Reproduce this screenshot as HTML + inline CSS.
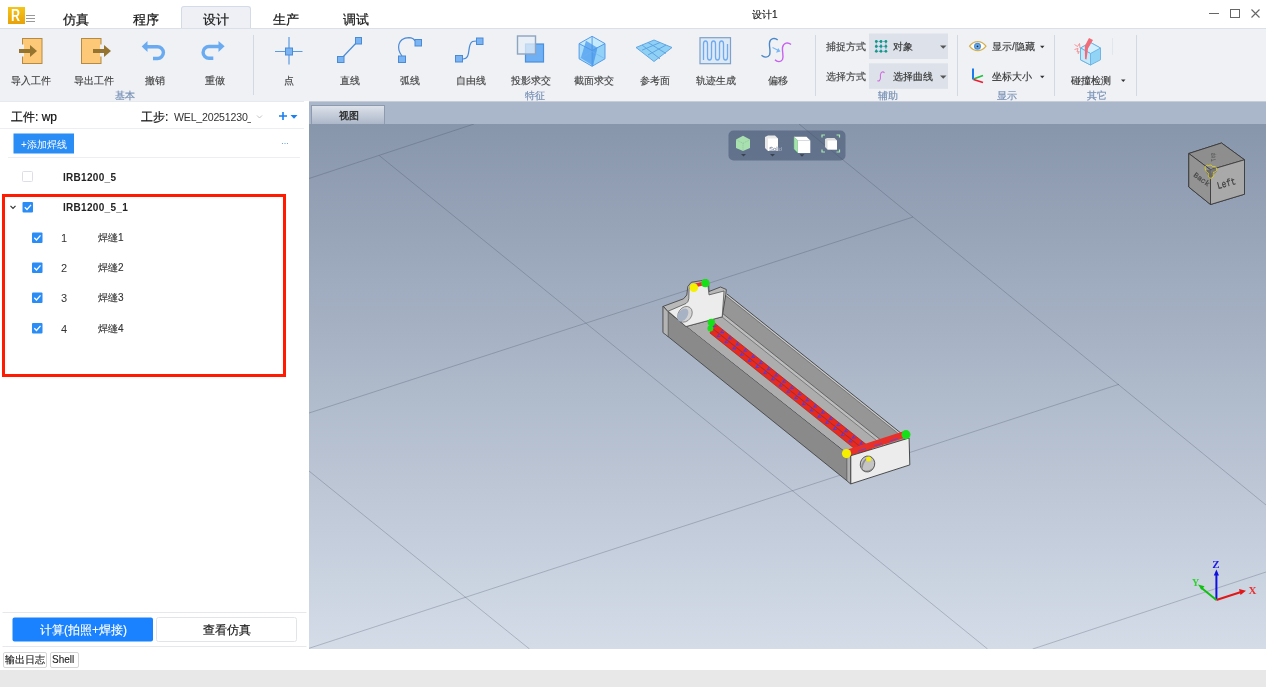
<!DOCTYPE html>
<html><head><meta charset="utf-8">
<style>
*{box-sizing:border-box;margin:0;padding:0}
html,body{will-change:transform;width:1266px;height:687px;overflow:hidden;background:#fff;font-family:"Liberation Sans",sans-serif;color:#333}
.a{position:absolute;white-space:nowrap}
.t10{font-size:10px;line-height:10px;color:#444;-webkit-text-stroke:0.15px currentColor}
.t13{font-size:12.5px;line-height:13px;color:#1a1a1a;-webkit-text-stroke:0.25px #1a1a1a}
.grp{font-size:10px;line-height:10px;color:#7890b5;-webkit-text-stroke:0.2px currentColor}
.sep{position:absolute;width:1px;background:#d5dbe6}
svg{position:absolute;overflow:visible}
</style></head><body>
<!-- title bar -->
<div class="a" style="left:0;top:0;width:1266px;height:28px;background:#fff"></div>
<div class="a" style="left:8px;top:7px;width:17px;height:17px;background:linear-gradient(#f5c518,#e8a10a)"></div>
<div class="a" style="left:10.5px;top:7.5px;font-size:16px;line-height:16px;font-weight:bold;color:#fff;transform:scaleX(0.78);transform-origin:left top;margin-left:0">R</div>
<div class="a" style="left:26px;top:15px;width:9px;height:1px;background:#999"></div>
<div class="a" style="left:26px;top:18px;width:9px;height:1px;background:#999"></div>
<div class="a" style="left:26px;top:21px;width:9px;height:1px;background:#999"></div>
<div class="a" style="left:181px;top:6px;width:70px;height:23px;background:#eef0f5;border:1px solid #d3dbe8;border-bottom:none;border-radius:3px 3px 0 0"></div>
<div class="a t13" style="left:63px;top:14px">仿真</div>
<div class="a t13" style="left:133px;top:14px">程序</div>
<div class="a t13" style="left:203px;top:14px">设计</div>
<div class="a t13" style="left:273px;top:14px">生产</div>
<div class="a t13" style="left:343px;top:14px">调试</div>
<div class="a t10" style="left:752px;top:10px;color:#222">设计1</div>
<!-- window controls -->
<div class="a" style="left:1209px;top:13px;width:10px;height:1px;background:#666"></div>
<div class="a" style="left:1230px;top:9px;width:10px;height:9px;border:1px solid #666"></div>
<svg style="left:1251px;top:9px" width="9" height="9"><path d="M0.5 0.5L8.5 8.5M8.5 0.5L0.5 8.5" stroke="#666" stroke-width="1.1"/></svg>

<!-- ribbon -->
<div class="a" style="left:0;top:28px;width:1266px;height:73px;background:#eff1f5;border-top:1px solid #d9e0ea"></div>


<!-- ribbon icons -->
<svg style="left:0;top:0" width="1266" height="101">
 <!-- import -->
 <rect x="22.5" y="38.5" width="19.5" height="25" fill="#fdc978" stroke="#b38b45" stroke-width="1"/>
 <rect x="21" y="44.5" width="3" height="12" fill="#eff1f5"/>
 <rect x="19" y="49" width="12" height="4" fill="#94742f"/>
 <path d="M30 45L37 51L30 57Z" fill="#94742f"/>
 <!-- export -->
 <rect x="81.5" y="38.5" width="19.5" height="25" fill="#fdc978" stroke="#b38b45" stroke-width="1"/>
 <rect x="100" y="44.5" width="3" height="12" fill="#eff1f5"/>
 <rect x="93" y="49" width="12" height="4" fill="#94742f"/>
 <path d="M104 45L111 51L104 57Z" fill="#94742f"/>
 <!-- undo -->
 <path d="M146.5 46.7H157.5A5.9 5.9 0 0 1 157.5 58.5H153" fill="none" stroke="#6aaaf0" stroke-width="3.4"/>
 <path d="M141.7 46.5L147.5 41V52Z" fill="#6aaaf0"/>
 <!-- redo -->
 <path d="M219 46.5H209A5.9 5.9 0 0 0 209 58.3H213.3" fill="none" stroke="#6aaaf0" stroke-width="3.4"/>
 <path d="M224.6 46.3L218.5 41V52Z" fill="#6aaaf0"/>
 <!-- point -->
 <path d="M275 51.5H302.5M289 37V64.5" stroke="#5b9be0" stroke-width="1.2"/>
 <rect x="285.5" y="48" width="7" height="7" fill="#7ab4f2" stroke="#4a8ad6" stroke-width="1"/>
 <!-- line -->
 <path d="M341 59L358 41" stroke="#4a8ad6" stroke-width="1.2"/>
 <rect x="337.5" y="56.5" width="6.5" height="6" fill="#7ab4f2" stroke="#4a8ad6" stroke-width="1"/>
 <rect x="355.5" y="37.5" width="6" height="6.5" fill="#7ab4f2" stroke="#4a8ad6" stroke-width="1"/>
 <!-- arc -->
 <path d="M402 56C396.5 49 397 38 409 37.6C412 37.6 414 39 415 41" fill="none" stroke="#4a8ad6" stroke-width="1.2"/>
 <rect x="398.5" y="56" width="7" height="6.5" fill="#7ab4f2" stroke="#4a8ad6" stroke-width="1"/>
 <rect x="415" y="39.5" width="6.5" height="6.5" fill="#7ab4f2" stroke="#4a8ad6" stroke-width="1"/>
 <!-- freeline -->
 <path d="M463 59C470 59 468 50 470 45C471.5 41 473 41 476.5 41" fill="none" stroke="#4a8ad6" stroke-width="1.2"/>
 <rect x="455.5" y="55.5" width="7" height="6.5" fill="#7ab4f2" stroke="#4a8ad6" stroke-width="1"/>
 <rect x="476.5" y="38" width="6.5" height="6.5" fill="#7ab4f2" stroke="#4a8ad6" stroke-width="1"/>
 <!-- projection -->
 <rect x="525.5" y="44" width="18" height="18" fill="#6fb0f5" stroke="#4a8fdc" stroke-width="1.2"/>
 <rect x="517.5" y="36" width="18" height="18" fill="rgba(230,238,246,0.75)" stroke="#8ea4bf" stroke-width="1.4"/>
 <!-- section cube -->
 <path d="M592.1 36.3L605 43.6V58.8L592.1 66.3L579.1 58.8V43.6Z" fill="#92d2f8"/>
 <path d="M592.1 36.3L605 43.6L592.1 50.5L579.1 43.6Z" fill="#c6eafd"/>
 <path d="M579.1 43.6L592.1 50.5V66.3L579.1 58.8Z" fill="#a6dcfa"/>
 <path d="M586 40.8L597.4 47.8L593 65.7L580.8 58Z" fill="#5fa8f2" opacity="0.92"/>
 <path d="M592.1 50.5L597.4 47.8L593 65.7L592.1 66.3Z" fill="#4f9cec" opacity="0.6"/>
 <path d="M592.1 36.3L605 43.6V58.8L592.1 66.3L579.1 58.8V43.6ZM579.1 43.6L592.1 50.5L605 43.6M592.1 50.5V66.3M592.1 36.3V50.5" fill="none" stroke="#4e94e4" stroke-width="0.9"/>
 <path d="M579.1 58.8L592.1 51.5L605 58.8" fill="none" stroke="#70b0ee" stroke-width="0.6"/>
 <!-- ref plane -->
 <path d="M636 47.5L654 40L672 47.5L654 61.5Z" fill="#8fd0f5" stroke="#5a9fe0" stroke-width="0.9"/>
 <path d="M642 45L660 58.8M648 42.5L666 53.5M630 0M642 50.2L660 42.5M648 55L666 45" stroke="#5a9fe0" stroke-width="0.9"/>
 <!-- trajectory -->
 <rect x="700" y="37.7" width="30.5" height="26" fill="#dde9f5" stroke="#7fa0c8" stroke-width="1.2"/>
 <path d="M703.5 60V44C703.5 40 707.5 40 707.5 44V57C707.5 61 711.5 61 711.5 57V44C711.5 40 715.5 40 715.5 44V57C715.5 61 719.5 61 719.5 57V44C719.5 40 723.5 40 723.5 44V57C723.5 61 727.5 61 727.5 57V44" fill="none" stroke="#6eaaf0" stroke-width="1.3"/>
 <!-- offset -->
 <path d="M777.7 40C775 37.5 770 38 769.5 43C769 47 771 51 769.5 55C768 58 764 57.5 761.5 55.2" fill="none" stroke="#4b86c8" stroke-width="1.4"/>
 <path d="M791 44.5C788 42 783.5 42.5 782.5 47.5C782 52 784 56 782.5 59.5C781 62.5 777 62 775 59.7" fill="none" stroke="#c860f0" stroke-width="1.4"/>
 <path d="M772.5 47.5L778 50.3" stroke="#7ab8f5" stroke-width="1.2"/>
 <path d="M776 52.8L780.5 51.6L778.2 48Z" fill="#7ab8f5"/>
 <!-- combos -->
 <rect x="869" y="33.5" width="79" height="25.5" fill="#dde2ea"/>
 <rect x="869" y="63.3" width="79" height="25.5" fill="#dde2ea"/>
 <path d="M876.3 41.5H885.9V51.3H876.3ZM881 41.5V51.3M876.3 46.4H885.9" fill="none" stroke="#3a90e0" stroke-width="0.8" stroke-dasharray="1.4 0.9"/>
 <g fill="#139a82">
  <circle cx="876.3" cy="41.5" r="1.4"/><circle cx="881" cy="41.5" r="1.4"/><circle cx="885.9" cy="41.5" r="1.4"/>
  <circle cx="876.3" cy="46.4" r="1.4"/><circle cx="881" cy="46.4" r="1.4"/><circle cx="885.9" cy="46.4" r="1.4"/>
  <circle cx="876.3" cy="51.3" r="1.4"/><circle cx="881" cy="51.3" r="1.4"/><circle cx="885.9" cy="51.3" r="1.4"/>
 </g>
 <path d="M940 45.5H946.5L943.25 48.8Z" fill="#555"/>
 <path d="M940 75.5H946.5L943.25 78.8Z" fill="#555"/>
 <path d="M884.5 73C883 71 881 72 880.5 74.5C880 77 881.5 78 879.5 80.5C879 81 878 81 877.5 80.5" fill="none" stroke="#d070e0" stroke-width="1.1"/>
 <!-- eye -->
 <path d="M969.5 46.2C974 40 981.5 40 986 46.2C981.5 52.2 974 52.2 969.5 46.2Z" fill="#fff" stroke="#d4b050" stroke-width="1.2"/>
 <circle cx="977.5" cy="46.3" r="3.5" fill="#4a8ed8"/>
 <circle cx="977.5" cy="46.3" r="2.3" fill="#6aaae8"/>
 <circle cx="977.5" cy="46.3" r="0.9" fill="#223"/>
 <path d="M1040 45.8H1044.5L1042.25 48.3Z" fill="#333"/>
 <!-- axis -->
 <path d="M973 68.5V79.5" stroke="#1a7af0" stroke-width="2"/>
 <path d="M973.5 79L983 75.5" stroke="#20c040" stroke-width="1.8"/>
 <path d="M973.5 79.5L983 82.5" stroke="#f01a30" stroke-width="1.8"/>
 <path d="M1040 75.8H1044.5L1042.25 78.3Z" fill="#333"/>
 <!-- collision -->
 <path d="M1090.5 42.5L1100.5 48V59.8L1090.5 65L1080.5 59.8V48Z" fill="#92d4f6" stroke="#6ab0e0" stroke-width="0.9"/>
 <path d="M1090.5 42.5L1100.5 48L1090.5 53.5L1080.5 48Z" fill="#d2f0ff" stroke="#6ab0e0" stroke-width="0.9"/>
 <path d="M1080.5 48L1090.5 53.5V65L1080.5 59.8Z" fill="#c2eafc" stroke="#6ab0e0" stroke-width="0.9"/>
 <path d="M1089 38L1093 40L1088 48.5L1086.5 59.5L1085 59L1084.8 46Z" fill="#f26b78"/>
 <path d="M1074.5 44.5L1077.5 46.5L1079.5 43.5L1080 48M1074.5 49.5L1078 48.5L1077 52L1079.5 51.5M1078 54L1079 52" fill="none" stroke="#f58a90" stroke-width="0.9"/>
 <path d="M1121 79.5H1125.5L1123.25 82Z" fill="#333"/>
 <!-- separators -->
 <rect x="253" y="35" width="1" height="60" fill="#d2d9e4"/>
 <rect x="815" y="35" width="1" height="61" fill="#d2d9e4"/>
 <rect x="957" y="35" width="1" height="61" fill="#d2d9e4"/>
 <rect x="1054" y="35" width="1" height="61" fill="#d2d9e4"/>
 <rect x="1136" y="35" width="1" height="61" fill="#d2d9e4"/>
 <rect x="1112" y="38" width="1" height="17" fill="#e2e6ee"/>
</svg>
<!-- ribbon labels -->
<div class="a t10" style="left:11px;top:76px">导入工件</div>
<div class="a t10" style="left:74px;top:76px">导出工件</div>
<div class="a t10" style="left:145px;top:76px">撤销</div>
<div class="a t10" style="left:205px;top:76px">重做</div>
<div class="a t10" style="left:284px;top:76px">点</div>
<div class="a t10" style="left:340px;top:76px">直线</div>
<div class="a t10" style="left:400px;top:76px">弧线</div>
<div class="a t10" style="left:456px;top:76px">自由线</div>
<div class="a t10" style="left:511px;top:76px">投影求交</div>
<div class="a t10" style="left:574px;top:76px">截面求交</div>
<div class="a t10" style="left:640px;top:76px">参考面</div>
<div class="a t10" style="left:696px;top:76px">轨迹生成</div>
<div class="a t10" style="left:768px;top:76px">偏移</div>
<div class="a t10" style="left:826px;top:42px">捕捉方式</div>
<div class="a t10" style="left:826px;top:72px">选择方式</div>
<div class="a t10" style="left:893px;top:42px;color:#333">对象</div>
<div class="a t10" style="left:893px;top:72px;color:#333">选择曲线</div>
<div class="a t10" style="left:992px;top:42px;color:#333">显示/隐藏</div>
<div class="a t10" style="left:992px;top:72px;color:#333">坐标大小</div>
<div class="a t10" style="left:1071px;top:76px;color:#333">碰撞检测</div>
<div class="a grp" style="left:115px;top:91px">基本</div>
<div class="a grp" style="left:525px;top:91px">特征</div>
<div class="a grp" style="left:878px;top:91px">辅助</div>
<div class="a grp" style="left:997px;top:91px">显示</div>
<div class="a grp" style="left:1087px;top:91px">其它</div>


<!-- left panel -->
<div class="a" style="left:0;top:101px;width:309px;height:548px;background:#fff"></div>
<div class="a" style="left:0;top:101px;width:304px;height:1px;background:#e6e9ee"></div>
<div class="a" style="left:11px;top:111px;font-size:12px;line-height:12px;color:#111;-webkit-text-stroke:0.2px #111">工件: wp</div>
<div class="a" style="left:141px;top:111px;font-size:12px;line-height:12px;color:#111;-webkit-text-stroke:0.2px #111">工步:</div>
<div class="a" style="left:174px;top:111px;width:77px;overflow:hidden;font-size:10.6px;line-height:13px;color:#333;letter-spacing:-0.2px">WEL_20251230_</div>
<svg style="left:0;top:0" width="309" height="649">
 <path d="M257 115.5L259.5 118L262 115.5" fill="none" stroke="#bbb" stroke-width="0.9"/>
 <path d="M279 116H287M283 112V120" stroke="#1a7ff0" stroke-width="1.6"/>
 <path d="M290.5 115H297.5L294 118.8Z" fill="#1a7ff0"/>
 <rect x="0" y="128" width="304" height="1" fill="#eceef2"/>
 <rect x="13.5" y="133.5" width="60.5" height="20" fill="#2a8cf5"/>
 <rect x="8" y="157" width="292" height="1" fill="#eceef2"/>
 <circle cx="282.5" cy="143.5" r="0.6" fill="#5a9ae0"/><circle cx="285" cy="143.5" r="0.6" fill="#5a9ae0"/><circle cx="287.5" cy="143.5" r="0.6" fill="#5a9ae0"/>
 <!-- unchecked -->
 <rect x="22.5" y="171.5" width="10" height="10" rx="1" fill="#fff" stroke="#dcdfe6" stroke-width="1"/>
 <!-- red box -->
 <rect x="3.5" y="195.5" width="281" height="180" fill="none" stroke="#ff1a00" stroke-width="3"/>
 <!-- chevron -->
 <path d="M10.5 205.8L13 208.3L15.5 205.8" fill="none" stroke="#333" stroke-width="1.2"/>
 <g>
  <rect x="22.5" y="202" width="10.5" height="10.5" rx="1" fill="#2a8cf5"/>
  <path d="M24.8 207.2L27 209.5L31 204.8" fill="none" stroke="#fff" stroke-width="1.3"/>
  <rect x="32" y="232.5" width="10.5" height="10.5" rx="1" fill="#2a8cf5"/>
  <path d="M34.3 237.7L36.5 240L40.5 235.3" fill="none" stroke="#fff" stroke-width="1.3"/>
  <rect x="32" y="262.5" width="10.5" height="10.5" rx="1" fill="#2a8cf5"/>
  <path d="M34.3 267.7L36.5 270L40.5 265.3" fill="none" stroke="#fff" stroke-width="1.3"/>
  <rect x="32" y="292.5" width="10.5" height="10.5" rx="1" fill="#2a8cf5"/>
  <path d="M34.3 297.7L36.5 300L40.5 295.3" fill="none" stroke="#fff" stroke-width="1.3"/>
  <rect x="32" y="323" width="10.5" height="10.5" rx="1" fill="#2a8cf5"/>
  <path d="M34.3 328.2L36.5 330.5L40.5 325.8" fill="none" stroke="#fff" stroke-width="1.3"/>
 </g>
 <rect x="2.5" y="612" width="304" height="1" fill="#e6e8ec"/>
 <rect x="12.5" y="617.5" width="140.5" height="24" rx="2" fill="#1a82ff"/>
 <rect x="156.5" y="617.5" width="140" height="24" rx="2" fill="#fff" stroke="#e2e4e8" stroke-width="1"/>
 <rect x="2.5" y="646" width="304" height="1" fill="#e6e8ec"/>
</svg>
<div class="a" style="left:21px;top:140px;font-size:10px;line-height:10px;color:#fff">+添加焊线</div>
<div class="a" style="left:63px;top:172px;font-size:10px;line-height:11px;color:#222;font-weight:bold;letter-spacing:0.3px">IRB1200_5</div>
<div class="a" style="left:63px;top:202px;font-size:10px;line-height:11px;color:#222;font-weight:bold;letter-spacing:0.3px">IRB1200_5_1</div>
<div class="a" style="left:61px;top:233px;font-size:11px;line-height:10px;color:#333">1</div>
<div class="a" style="left:98px;top:233px;font-size:10px;line-height:10px;color:#333;-webkit-text-stroke:0.12px #333">焊缝1</div>
<div class="a" style="left:61px;top:263px;font-size:11px;line-height:10px;color:#333">2</div>
<div class="a" style="left:98px;top:263px;font-size:10px;line-height:10px;color:#333;-webkit-text-stroke:0.12px #333">焊缝2</div>
<div class="a" style="left:61px;top:293px;font-size:11px;line-height:10px;color:#333">3</div>
<div class="a" style="left:98px;top:293px;font-size:10px;line-height:10px;color:#333;-webkit-text-stroke:0.12px #333">焊缝3</div>
<div class="a" style="left:61px;top:324px;font-size:11px;line-height:10px;color:#333">4</div>
<div class="a" style="left:98px;top:324px;font-size:10px;line-height:10px;color:#333;-webkit-text-stroke:0.12px #333">焊缝4</div>
<div class="a" style="left:40px;top:624px;font-size:12px;line-height:12px;color:#fff;-webkit-text-stroke:0.15px #fff">计算(拍照+焊接)</div>
<div class="a" style="left:203px;top:624px;font-size:12px;line-height:12px;color:#222;-webkit-text-stroke:0.2px #222">查看仿真</div>

<!-- viewport -->
<div class="a" style="left:309px;top:101px;width:957px;height:23px;background:#aab6ca"></div>
<div class="a" style="left:309px;top:101px;width:957px;height:1px;background:#c6ccd8"></div>
<div class="a" style="left:311px;top:105px;width:74px;height:20px;border:1px solid #8e9ab0;border-bottom:none;background:linear-gradient(#dde2ea,#a9b5c7)"></div>
<div class="a" style="left:339px;top:110px;font-size:10px;line-height:11px;color:#333;font-weight:bold">视图</div>
<div class="a" style="left:309px;top:124px;width:957px;height:525px;background:linear-gradient(#8896ac,#d4dce8)"></div>
<svg style="left:0;top:0" width="1266" height="649">
 <defs>
  <clipPath id="vpc"><rect x="309" y="124" width="957" height="525"/></clipPath>
  <clipPath id="inner"><path d="M668.2 311.7L760 283.7L940 428.6L850.8 455.7Z"/></clipPath>
   <clipPath id="tubes"><path d="M714 315L940 200L940 600L708.5 338Z"/></clipPath>
 </defs>
 <g clip-path="url(#vpc)" stroke="rgba(60,72,92,0.3)" stroke-width="0.9" fill="none">
  <path d="M309 178.5L474 124"/>
  <path d="M379.3 155.6L987.6 649"/>
  <path d="M799 124L1266 505"/>
  <path d="M309 471L529.5 649"/>
  <path d="M309 413L913 217"/>
  <path d="M309 648.3L1119 384.3"/>
  <path d="M1032.7 649L1266 572"/>
 </g>
 <!-- toolbar -->
 <rect x="728.5" y="130.5" width="117" height="30" rx="5" fill="rgba(62,78,108,0.52)"/>
 <path d="M743 135.8L750 139.6V148L743 151L736 148V139.6Z" fill="#a8e0b0"/>
 <path d="M736 139.6L743 143.3L750 139.6M743 143.3V151" fill="none" stroke="#80b090" stroke-width="0.6" stroke-dasharray="1 1"/>
 <path d="M741 154H746L743.5 156.6Z" fill="#3a4250"/>
 <path d="M765 137L768 135.5H775L778 138.5V151H768L765 148Z" fill="#e8e8e8"/>
 <rect x="768" y="138.5" width="10" height="12.5" fill="#fff"/>
 <text x="769" y="151" font-size="6" fill="#fff" stroke="#667590" stroke-width="0.3" font-family="Liberation Sans">Solid</text>
 <path d="M770 154H775L772.5 156.6Z" fill="#3a4250"/>
 <path d="M794 136.8L798 140.5V153L794 149Z" fill="#a8e0b0" stroke="#60c070" stroke-width="0.5"/>
 <path d="M794 136.8H806.5L810.3 140.5H798Z" fill="#fff"/>
 <rect x="798" y="140.5" width="12.3" height="12.5" fill="#fff"/>
 <path d="M799.5 154.3H804.5L802 156.8Z" fill="#3a4250"/>
 <path d="M822 137.5V135H825M836.5 135H839.5V137.5M839.5 149.5V152H836.5M825 152H822V149.5" fill="none" stroke="#a8e8b0" stroke-width="1.2"/>
 <path d="M825 139L827 138H834.5L837 140.5V149.5H827.5L825 147Z" fill="#ddd"/>
 <rect x="827.5" y="140.5" width="9.5" height="9" fill="#fff"/>
 <!-- view cube -->
 <path d="M1221.5 143L1244.5 159.8V194.2L1210.5 204.5L1188.8 187V153.5Z" fill="#999" stroke="#333" stroke-width="0.9"/>
 <path d="M1221.5 143L1244.5 159.8L1210.5 169.8L1188.8 153.5Z" fill="#8e8e8e" stroke="#333" stroke-width="0.8"/>
 <path d="M1188.8 153.5L1210.5 169.8V204.5L1188.8 187Z" fill="#939393" stroke="#333" stroke-width="0.8"/>
 <path d="M1210.5 169.8L1244.5 159.8V194.2L1210.5 204.5Z" fill="#a9a9a9" stroke="#333" stroke-width="0.8"/>
 <text transform="translate(1218 189) rotate(-15)" font-size="10" font-family="Liberation Mono" fill="#3a3a3a" stroke="#3a3a3a" stroke-width="0.2" textLength="19" lengthAdjust="spacingAndGlyphs">Left</text>
 <text transform="translate(1193 176) rotate(36)" font-size="7.5" font-family="Liberation Mono" fill="#444" stroke="#444" stroke-width="0.15">Back</text>
 <text transform="translate(1216 161) rotate(-100) scale(0.7 1)" font-size="7" font-family="Liberation Mono" fill="#505050">Top</text>
 <path d="M1205.5 170L1210.5 169.8L1213 176L1210.4 179.5L1208 176Z" fill="#6a6a6a"/>
 <path d="M1210.5 169.8L1216 168L1216.5 171.5L1213 176Z" fill="#757575"/>
 <path d="M1205.2 168.6C1204.6 166 1206.8 164.6 1208.8 165.6C1210.2 164.4 1212.2 165.2 1212.6 166.8C1214.4 165.8 1217 167 1216.8 169.4C1216.6 171.4 1214.8 172.2 1213.6 172C1214.4 174 1213.8 177.8 1211.2 178.2C1208.6 178.6 1207.8 175.6 1208.4 173.2C1206.8 172.6 1205.6 170.8 1205.2 168.6Z" fill="none" stroke="#e0d020" stroke-width="0.9"/>
 <!-- axis -->
 <path d="M1216.4 600V574" stroke="#1010e0" stroke-width="2"/>
 <path d="M1213.8 575.5L1216.4 569.5L1219 575.5Z" fill="#1010e0"/>
 <path d="M1216.4 600L1241 592" stroke="#e01818" stroke-width="2"/>
 <path d="M1239 589L1246 590.8L1240.5 595Z" fill="#e01818"/>
 <path d="M1216.4 600L1201 587.5" stroke="#10c010" stroke-width="2"/>
 <path d="M1198 584.5L1204.5 586.2L1201.5 589.8Z" fill="#10c010"/>
 <text x="1212.2" y="567.5" font-size="11" font-family="Liberation Serif" font-weight="bold" fill="#1818e8">Z</text>
 <text x="1248.5" y="593.5" font-size="11" font-family="Liberation Serif" font-weight="bold" fill="#e83030">X</text>
 <text x="1192" y="585.5" font-size="10" font-family="Liberation Serif" font-weight="bold" fill="#30d030">Y</text>
 <!-- model: left outer face -->
 <path d="M663.1 306.1L668.2 311.7L847 453.3L850.8 455.7V483.9L663.1 332.6Z" fill="#8a8a8a" stroke="#3a3a3a" stroke-width="0.8"/>
 <path d="M663.1 306.1L668.2 311.7V336.7L663.1 332.6Z" fill="#b4b4b4" stroke="#444" stroke-width="0.6"/>
 <path d="M846.9 453.3L850.8 455.7V483.9L846.9 480.7Z" fill="#b0b0b0" stroke="#444" stroke-width="0.6"/>
 <!-- interior -->
 <g clip-path="url(#inner)">
  <path d="M640 224.4L940 464.4L940 466.9L640 226.9Z" fill="#c9c9c9"/>
  <path d="M640 226.9L940 466.9L940 487.4L640 247.4Z" fill="#969696"/>
  <path d="M640 247.4L940 487.4L940 491.3L640 251.3Z" fill="#bdbdbd"/>
  <path d="M640 251.3L940 491.3L940 529.8L640 289.8Z" fill="#adadad"/>
  <path d="M640 224.4L940 464.4" stroke="#3a3a3a" stroke-width="0.9"/>
  <path d="M640 226.9L940 466.9" stroke="#555" stroke-width="0.6"/>
  <path d="M640 247.4L940 487.4" stroke="#444" stroke-width="0.7"/>
  <path d="M640 251.3L940 491.3" stroke="#555" stroke-width="0.6"/>
  <path d="M640 289.8L940 529.8" stroke="#333" stroke-width="0.9"/>
 </g>
 <g clip-path="url(#inner)"><g clip-path="url(#tubes)">
  <path d="M690 303.5L880 455.5L880 462.4L690 310.4Z" fill="#e62a20" stroke="#a82018" stroke-width="0.7"/>
  <path d="M690 310.6L880 462.6L880 469.0L690 317.0Z" fill="#e62a20" stroke="#a82018" stroke-width="0.7"/>
  <path d="M715.0 323.5L713.1 326.3L716.3 326.4M711.5 327.4L709.6 330.2L712.8 330.3M722.8 329.7L720.9 332.5L724.0 332.6M719.2 333.6L717.4 336.4L720.5 336.5M730.5 335.9L728.6 338.7L731.8 338.8M727.0 339.8L725.1 342.6L728.3 342.7M738.2 342.1L736.4 344.9L739.5 345.0M734.8 346.0L732.9 348.8L736.0 348.9M746.0 348.3L744.1 351.1L747.3 351.2M742.5 352.2L740.6 355.0L743.8 355.1M753.8 354.5L751.9 357.3L755.0 357.4M750.2 358.4L748.4 361.2L751.5 361.3M761.5 360.7L759.6 363.5L762.8 363.6M758.0 364.6L756.1 367.4L759.3 367.5M769.2 366.9L767.4 369.7L770.5 369.8M765.8 370.8L763.9 373.6L767.0 373.7M777.0 373.1L775.1 375.9L778.3 376.0M773.5 377.0L771.6 379.8L774.8 379.9M784.8 379.3L782.9 382.1L786.0 382.2M781.2 383.2L779.4 386.0L782.5 386.1M792.5 385.5L790.6 388.3L793.8 388.4M789.0 389.4L787.1 392.2L790.3 392.3M800.2 391.7L798.4 394.5L801.5 394.6M796.8 395.6L794.9 398.4L798.0 398.5M808.0 397.9L806.1 400.7L809.3 400.8M804.5 401.8L802.6 404.6L805.8 404.7M815.8 404.1L813.9 406.9L817.0 407.0M812.2 408.0L810.4 410.8L813.5 410.9M823.5 410.3L821.6 413.1L824.8 413.2M820.0 414.2L818.1 417.0L821.3 417.1M831.2 416.5L829.4 419.3L832.5 419.4M827.8 420.4L825.9 423.2L829.0 423.3M839.0 422.7L837.1 425.5L840.3 425.6M835.5 426.6L833.6 429.4L836.8 429.5M846.8 428.9L844.9 431.7L848.0 431.8M843.2 432.8L841.4 435.6L844.5 435.7M854.5 435.1L852.6 437.9L855.8 438.0M851.0 439.0L849.1 441.8L852.3 441.9M862.2 441.3L860.4 444.1L863.5 444.2M858.8 445.2L856.9 448.0L860.0 448.1" fill="none" stroke="#4a3ee8" stroke-width="1.1"/>
 </g></g>
 <!-- back plate -->
 <path d="M663.3 306.3L683.5 298.8L686.8 295L687.8 286.5L691.2 282.3L706.5 279.8L708.5 281.5L709 291.5L720.5 287L726.3 289.5L725.8 294.5L722.2 316.8L686 326.5L668.2 311.7Z" fill="#b9b9b9" stroke="#3a3a3a" stroke-width="0.8"/>
 <path d="M668.2 311.2L686 303.5Q688.5 302 688.8 298.5L689.1 289.3Q689.5 285.5 692.7 284.7L707.5 281.8L709 294.9L724 291L722.2 316.8L686 326.5Z" fill="#ececec" stroke="#444" stroke-width="0.7"/>
 <ellipse cx="685" cy="314.3" rx="6.6" ry="8.4" transform="rotate(35 685 314.3)" fill="#d4d4d4" stroke="#555" stroke-width="0.6"/>
 <ellipse cx="682.8" cy="315" rx="4.6" ry="7.2" transform="rotate(35 682.8 315)" fill="#a7b2c4"/>
 <path d="M691 284.5L707 281L708 284.5L692 288Z" fill="#e8302a"/>
 <circle cx="705.4" cy="283.2" r="4.1" fill="#18e018"/>
 <circle cx="693.8" cy="287.6" r="4.3" fill="#f4f000"/>
 <circle cx="711.4" cy="322.4" r="3.7" fill="#18e018"/>
 <circle cx="710.4" cy="328.4" r="3" fill="#18e018"/>
 <!-- front plate -->
 <path d="M846 450L904.5 431L907 437L848 456.5Z" fill="#e8302a"/>
 <path d="M858 451L866 448.5M874 446L882 443.5M890 441L898 438.5" stroke="#5a48d8" stroke-width="0.9"/>
 <path d="M850.8 455.7L909.1 438L909.8 464.9L850.8 483.9Z" fill="#ececec" stroke="#3a3a3a" stroke-width="0.9"/>
 <ellipse cx="867.5" cy="464" rx="7.2" ry="8" transform="rotate(15 867.5 464)" fill="#c4c4c4" stroke="#444" stroke-width="0.8"/>
 <path d="M861 468.5C861.5 461 866 456.5 871 457.5C866.5 458.5 863.5 462 862.5 469.5Z" fill="#8f8f8f"/>
 <path d="M862 469.5C864 471.5 869 472 872.5 468.5" fill="none" stroke="#666" stroke-width="0.6"/>
 <circle cx="868.6" cy="459" r="2.5" fill="#f4f000"/>
 <circle cx="906" cy="434.6" r="4.5" fill="#18e018"/>
 <circle cx="846.5" cy="453.6" r="4.6" fill="#f4f000"/>
</svg>

<!-- bottom -->
<div class="a" style="left:0;top:649px;width:1266px;height:21px;background:#fff"></div>
<div class="a" style="left:2.5px;top:651.5px;width:44.5px;height:16px;border:1px solid #d6d6d6;border-radius:2px;background:#fff"></div>
<div class="a" style="left:49.5px;top:651.5px;width:29px;height:16px;border:1px solid #d6d6d6;border-radius:2px;background:#fff"></div>
<div class="a" style="left:5px;top:654px;font-size:10px;line-height:11px;color:#222;-webkit-text-stroke:0.15px #222">输出日志</div>
<div class="a" style="left:52px;top:654px;font-size:10px;line-height:11px;color:#222;-webkit-text-stroke:0.1px #222">Shell</div>
<div class="a" style="left:0;top:670px;width:1266px;height:17px;background:#e8e8e8"></div>
</body></html>
